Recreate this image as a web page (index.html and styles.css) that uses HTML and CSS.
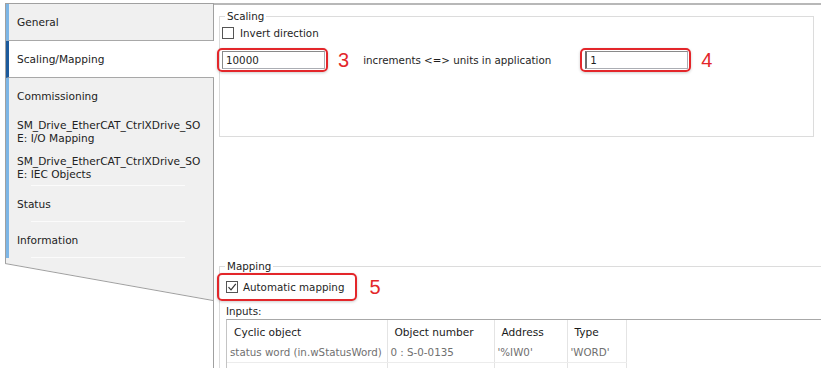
FILE: index.html
```html
<!DOCTYPE html>
<html lang="en">
<head>
    <meta charset="UTF-8">
    <title>Scaling/Mapping</title>
    <link rel="stylesheet" href="styles.css">
</head>
<body>
    <div class="window">
        <aside class="sidebar">
            <ul class="tabs">
                <li class="tab">General</li>
                <li class="tab active">Scaling/Mapping</li>
                <li class="tab">Commissioning</li>
                <li class="tab">SM_Drive_EtherCAT_CtrlXDrive_SO<br>E: I/O Mapping</li>
                <li class="tab tab-line">SM_Drive_EtherCAT_CtrlXDrive_SO<br>E: IEC Objects</li>
                <li class="tab tab-line">Status</li>
                <li class="tab tab-line">Information</li>
            </ul>
            <svg class="tail" width="208" height="110" viewBox="0 0 208 110">
                <polygon points="0,0 208,0 208,42 0,5" fill="#f0f0f0"/>
                <line x1="0.5" y1="0" x2="0.5" y2="5" stroke="#a0a0a0"/>
                <line x1="0" y1="5.5" x2="208" y2="42.5" stroke="#a0a0a0"/>
            </svg>
        </aside>

        <main class="panel">
            <fieldset class="group scaling">
                <legend>Scaling</legend>
                <label class="check"><span class="box"></span>Invert direction</label>
                <div class="scale-row">
                    <div class="mark"><div class="field">10000</div></div>
                    <span class="callout">3</span>
                    <span class="scale-text">increments &lt;=&gt; units in application</span>
                    <div class="mark"><div class="field field-focus">1</div></div>
                    <span class="callout">4</span>
                </div>
            </fieldset>

            <fieldset class="group mapping">
                <legend>Mapping</legend>
                <div class="auto-row">
                    <div class="mark mark-check">
                        <label class="check">
                            <span class="box">
                                <svg width="10" height="10" viewBox="0 0 10 10"><path d="M1.5 5.2 L4 7.8 L8.8 1.8" fill="none" stroke="#333" stroke-width="1.2"/></svg>
                            </span>Automatic mapping
                        </label>
                    </div>
                    <span class="callout">5</span>
                </div>
                <div class="inputs-label">Inputs:</div>
                <div class="list">
                    <table>
                        <thead>
                            <tr>
                                <th class="col-obj">Cyclic object</th>
                                <th class="col-num">Object number</th>
                                <th class="col-addr">Address</th>
                                <th class="col-type">Type</th>
                            </tr>
                        </thead>
                        <tbody>
                            <tr>
                                <td>status word (in.wStatusWord)</td>
                                <td>0 : S-0-0135</td>
                                <td>'%IW0'</td>
                                <td>'WORD'</td>
                            </tr>
                            <tr>
                                <td>position feedback (in.diPos)</td>
                                <td>0 : S-0-0051</td>
                                <td>'%ID1'</td>
                                <td>'DINT'</td>
                            </tr>
                        </tbody>
                    </table>
                </div>
            </fieldset>
        </main>
    </div>
</body>
</html>
```

FILE: styles.css
```css
* {
    box-sizing: border-box;
    margin: 0;
    padding: 0;
}

body {
    width: 821px;
    height: 368px;
    overflow: hidden;
    background-color: #fff;
    color: #1e1e1e;
    font-family: 'DejaVu Sans', sans-serif;
    font-size: 10.3px;
}

.window {
    display: flex;
    height: 368px;
    padding-top: 3px;
}

/* left tab column */

.sidebar {
    width: 209px;
    margin-left: 5px;
    border-right: 1px solid #a0a0a0;
    display: flex;
    flex-direction: column;
    flex-shrink: 0;
}

.tabs {
    list-style: none;
    border-top: 1px solid #a0a0a0;
    border-left: 1px solid #a0a0a0;
    background-color: #f0f0f0;
}

.tab {
    height: 36px;
    display: flex;
    align-items: center;
    padding-left: 8px;
    border-left: 3px solid #7db6e6;
    font-size: 10.6px;
    line-height: 13px;
    color: #222;
}

.tab:nth-child(1),
.tab.active {
    height: 37px;
    border-bottom: 1px solid #a8a8a8;
}

.tab.active {
    background-color: #fff;
    border-left-color: #1c5a9c;
    margin-right: -1px;
}

.tab-line {
    background: linear-gradient(#fbfbfb, #fbfbfb) no-repeat 22px 100% / 154px 1px;
}

.tail {
    display: block;
}

/* right panel */

.panel {
    flex: 1;
    border-top: 2px solid #b8b8b8;
    overflow: hidden;
}

.group {
    border: 1px solid #dcdcdc;
    padding: 0 0 0 2px;
}

.group legend {
    margin-left: 3px;
    padding: 0 2px;
    line-height: 12px;
    color: #222;
}

.scaling {
    margin: 5px 7px 0 5px;
    height: 127px;
}

.mapping {
    margin: 123px -20px 0 5px;
    height: 140px;
}

.check {
    display: flex;
    align-items: center;
    gap: 6px;
    height: 14px;
    margin-top: 4px;
}

.box {
    width: 12px;
    height: 12px;
    border: 1px solid #555;
    background-color: #fff;
    display: flex;
    align-items: center;
    justify-content: center;
}

.scale-row {
    display: flex;
    align-items: center;
    margin-top: 8px;
}

.mark {
    border: 2px solid #e3262a;
    border-radius: 5px;
    padding: 1px 1px 1px 3px;
    margin-left: -5px;
    box-shadow: 0 1px 3px rgba(0, 0, 0, 0.2);
}

.scale-row .mark + .callout + .scale-text + .mark {
    margin-left: 0;
}

.field {
    width: 103px;
    height: 18px;
    border: 1px solid #abadb3;
    border-top-color: #8a8a8a;
    border-left-color: #8a8a8a;
    background-color: #fff;
    padding-left: 3px;
    line-height: 16px;
}

.field-focus {
    border-left: 2px solid #6d6d6d;
}

.callout {
    font-family: 'Liberation Sans', sans-serif;
    font-size: 20px;
    color: #e3262a;
    margin-left: 10px;
    line-height: 20px;
}

.scale-text {
    width: 217px;
    margin-left: 14px;
}

.auto-row {
    display: flex;
    align-items: center;
    margin-top: 1px;
}

.mark-check {
    height: 28px;
    padding: 0 11px 0 7px;
    display: flex;
    align-items: center;
}

.mark-check .check {
    margin-top: 0;
    gap: 5px;
}

.auto-row .callout {
    margin-left: 12px;
}

.inputs-label {
    margin: 4px 0 0 4px;
    line-height: 12px;
}

.list {
    margin: 2px 0 0 4px;
    border-top: 1px solid #a8a8a8;
    border-left: 1px solid #c4c4c4;
    height: 60px;
}

table {
    border-collapse: collapse;
    table-layout: fixed;
}

th {
    height: 23px;
    font-weight: normal;
    text-align: left;
    padding-left: 7px;
    font-size: 10.6px;
    color: #1a1a1a;
    border-right: 1px solid #e4e4e4;
}

td {
    height: 19px;
    padding-left: 3px;
    color: #707070;
    white-space: nowrap;
    border-right: 1px solid #e4e4e4;
    border-bottom: 1px solid #ececec;
}

.col-obj {
    width: 160px;
}

.col-num {
    width: 107px;
}

.col-addr {
    width: 73px;
}

.col-type {
    width: 59px;
}
```
